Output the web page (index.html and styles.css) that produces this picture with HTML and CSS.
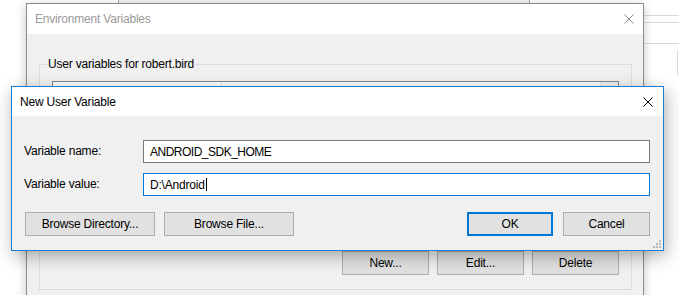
FILE: index.html
```html
<!DOCTYPE html>
<html>
<head>
<meta charset="utf-8">
<link rel="stylesheet" href="styles.css">
</head>
<body>
<div class="desk">
  <div class="back-top"></div>
  <div class="back-right">
    <div class="line l1"></div>
    <div class="line l2"></div>
    <div class="line l3"></div>
    <div class="vline"></div>
  </div>

  <div class="win env">
    <div class="titlebar inactive">
      <span class="title">Environment Variables</span>
      <svg class="close" width="10" height="10" viewBox="0 0 10 10"><path d="M0.5 0.5L9.5 9.5M9.5 0.5L0.5 9.5" stroke="#8a8a8a" stroke-width="1" fill="none"/></svg>
    </div>
    <div class="env-body">
      <fieldset class="group">
        <legend>User variables for robert.bird</legend>
        <div class="listview">
          <div class="lv-head">
            <div class="col c1"></div>
            <div class="col c2"></div>
            <div class="col c3"></div>
          </div>
        </div>
        <div class="btnrow">
          <div class="btn w87">New...</div>
          <div class="btn w87">Edit...</div>
          <div class="btn w87">Delete</div>
        </div>
      </fieldset>
    </div>
  </div>

  <div class="win dlg">
    <div class="titlebar">
      <span class="title">New User Variable</span>
      <svg class="close" width="10" height="10" viewBox="0 0 10 10"><path d="M0.5 0.5L9.5 9.5M9.5 0.5L0.5 9.5" stroke="#000" stroke-width="1" fill="none"/></svg>
    </div>
    <div class="dlg-body">
      <div class="form">
        <label class="lbl">Variable name:</label>
        <div class="field">ANDROID_SDK_HOME</div>
        <label class="lbl">Variable value:</label>
        <div class="field focus">D:\Android<span class="caret"></span></div>
      </div>
      <div class="actions">
        <div class="btn w130">Browse Directory...</div>
        <div class="btn w130">Browse File...</div>
        <div class="spacer"></div>
        <div class="btn w86 default">OK</div>
        <div class="btn w87">Cancel</div>
      </div>
    </div>
    <svg class="grip" width="10" height="10" viewBox="0 0 10 10">
      <rect x="7" y="1" width="2" height="2" fill="#b8b8b8"/>
      <rect x="4" y="4" width="2" height="2" fill="#b8b8b8"/>
      <rect x="7" y="4" width="2" height="2" fill="#b8b8b8"/>
      <rect x="1" y="7" width="2" height="2" fill="#b8b8b8"/>
      <rect x="4" y="7" width="2" height="2" fill="#b8b8b8"/>
      <rect x="7" y="7" width="2" height="2" fill="#b8b8b8"/>
    </svg>
  </div>
</div>
</body>
</html>
```

FILE: styles.css
```css
* { box-sizing: border-box; }
html, body {
  margin: 0;
  padding: 0;
  background: #ffffff;
}
body {
  font-family: "Liberation Sans", Arial, sans-serif;
  font-size: 12px;
  letter-spacing: -0.2px;
  color: #000;
}
.desk {
  position: relative;
  width: 679px;
  height: 295px;
  overflow: hidden;
  background: #fff;
}
.back-top {
  position: absolute;
  left: 118px;
  top: -10px;
  width: 412px;
  height: 14px;
  border: 1px solid #a8a8a8;
  background: #f4f4f4;
}
.back-right {
  position: absolute;
  left: 643px;
  top: 0;
  width: 36px;
  height: 100px;
}
.back-right .line {
  position: absolute;
  left: 0;
  right: 0;
  height: 1px;
  background: #dadada;
}
.back-right .l1 { top: 15px; }
.back-right .l2 { top: 22px; }
.back-right .l3 { top: 43px; }
.back-right .vline {
  position: absolute;
  left: 34px;
  top: 50px;
  width: 1px;
  height: 25px;
  background: #dadada;
}

.win {
  position: absolute;
  display: flex;
  flex-direction: column;
}
.env {
  left: 26px;
  top: 3px;
  width: 618px;
  height: 330px;
  border: 1px solid #8c8c8c;
  background: #f0f0f0;
  box-shadow: 0 2px 10px rgba(0,0,0,0.22);
}
.titlebar {
  display: flex;
  align-items: center;
  justify-content: space-between;
  background: #fff;
  flex: none;
}
.env .titlebar {
  height: 30px;
  padding: 0 9px 0 8px;
}
.titlebar.inactive .title { color: #9a9a9a; }
.title { line-height: 16px; }
.close { display: block; flex: none; }

.env-body {
  padding: 23px 11px 0 12px;
}
.group {
  margin: 0;
  border: 1px solid #dcdcdc;
  padding: 9px 12px 14px 12px;
  min-width: 0;
}
.group legend {
  padding: 0 1px;
  margin-left: -5px;
  line-height: 15px;
}
.listview {
  height: 160px;
  border: 1px solid #828790;
  background: #fff;
  margin-bottom: 10px;
}
.lv-head {
  display: flex;
  height: 22px;
}
.lv-head .col { height: 100%; border-right: 1px solid #e5e5e5; }
.lv-head .c1 { width: 169px; }
.lv-head .c2 { flex: 1; }
.lv-head .c3 { width: 17px; background: #f0f0f0; border-right: none; }

.btnrow {
  display: flex;
  justify-content: flex-end;
  gap: 8px;
}
.btn {
  height: 24px;
  border: 1px solid #adadad;
  background: #e1e1e1;
  display: flex;
  align-items: center;
  justify-content: center;
  flex: none;
}
.w87 { width: 87px; }
.w86 { width: 86px; }
.w130 { width: 130px; }
.btn.default { border: 2px solid #0078d7; }

.dlg {
  left: 11px;
  top: 86px;
  width: 653px;
  height: 165px;
  border: 1px solid #1c7fd6;
  background: #f0f0f0;
  box-shadow: 2px 5px 16px rgba(0,0,0,0.32);
}
.dlg .titlebar {
  height: 29px;
  padding: 0 10px 0 8px;
}
.dlg-body {
  flex: 1;
  padding: 24px 13px 0 12px;
  display: flex;
  flex-direction: column;
}
.form {
  display: grid;
  grid-template-columns: 119px 1fr;
  row-gap: 10px;
  align-items: center;
}
.lbl { line-height: 15px; }
.field {
  height: 23px;
  border: 1px solid #7a7a7a;
  background: #fff;
  padding: 0 6px;
  display: flex;
  align-items: center;
  letter-spacing: -0.5px;
}
.field.focus { border-color: #0078d7; letter-spacing: -0.2px; }
.caret {
  display: inline-block;
  width: 1px;
  height: 13px;
  background: #000;
  margin-left: 1px;
}
.actions {
  display: flex;
  gap: 9px;
  margin-top: 16px;
  padding-left: 1px;
}
.actions .spacer { flex: 1; }
.actions .default { margin-right: 1px; }
.grip {
  position: absolute;
  right: 1px;
  bottom: 1px;
}
```
